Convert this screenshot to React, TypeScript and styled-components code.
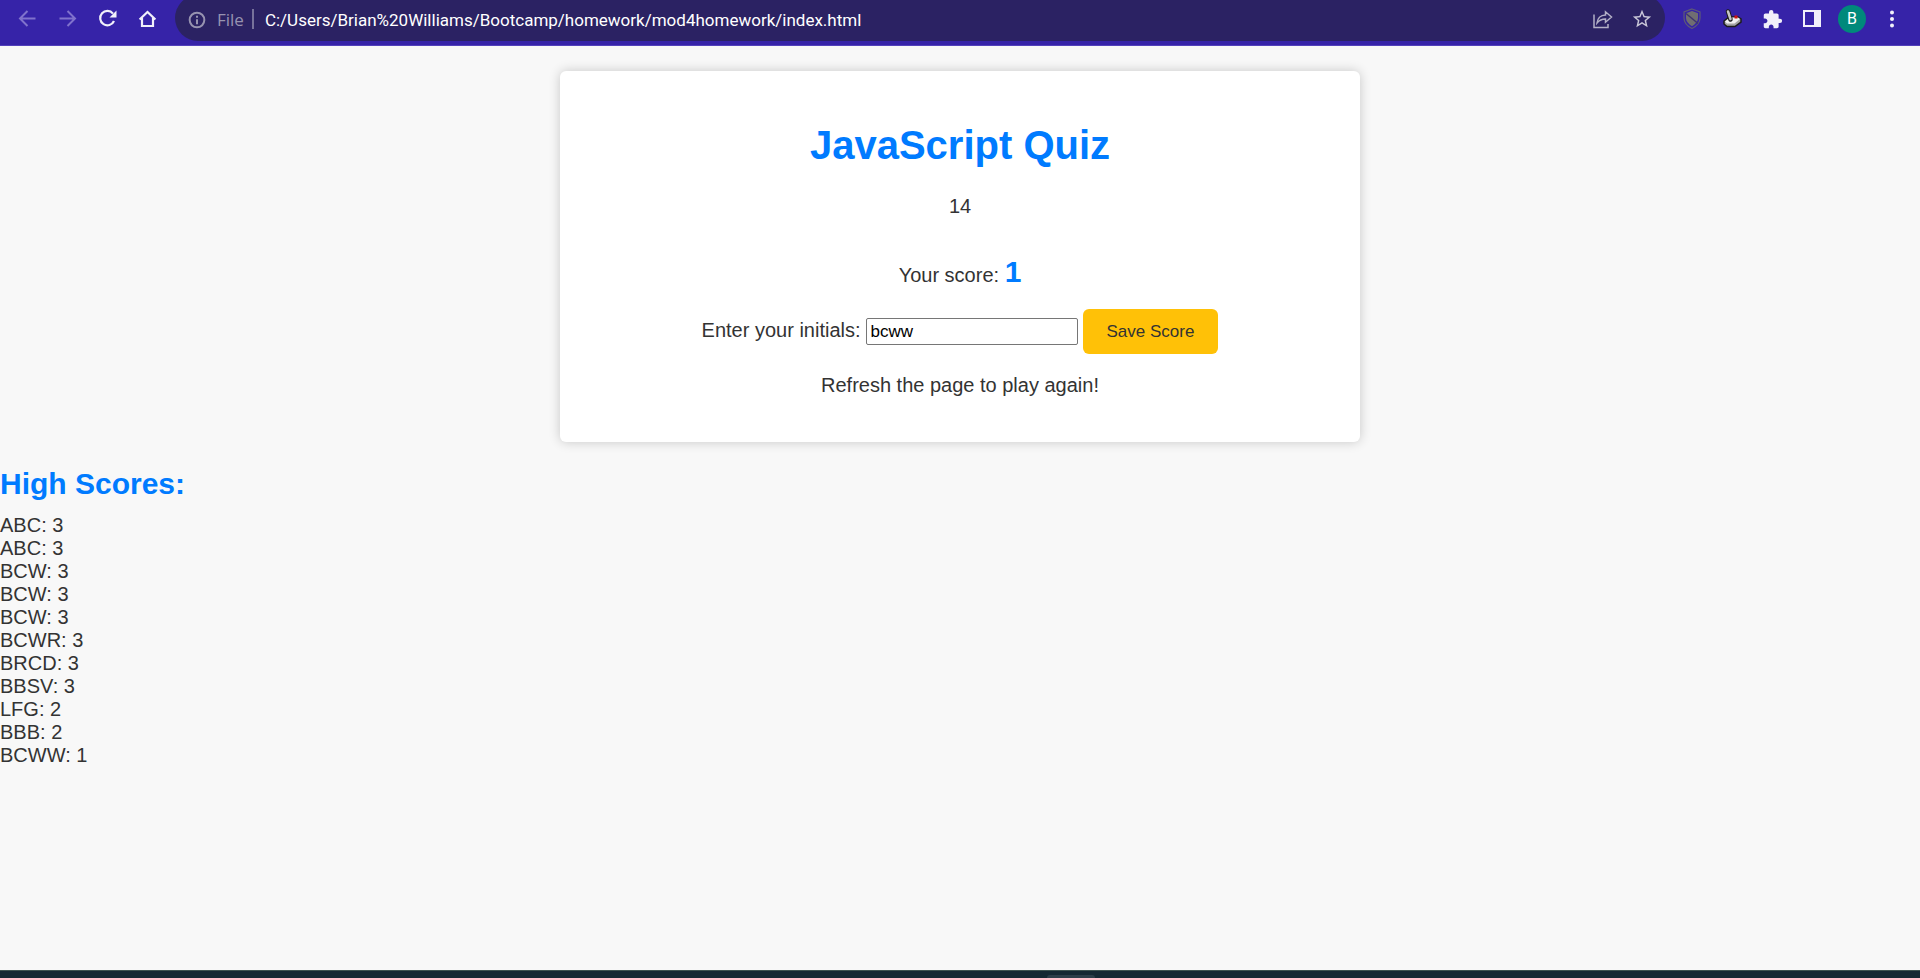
import React, { useState } from "react";
import styled, { createGlobalStyle } from "styled-components";
import { MdExtension, MdStarBorder } from "react-icons/md";

const GlobalStyle = createGlobalStyle`
  *, *::before, *::after { box-sizing: border-box; }
  body {
    margin: 0;
    background: #f8f8f8;
    color: #333;
    font: 20px/23px "Liberation Sans", Arial, sans-serif;
  }
`;

const Shell = styled.div`
  display: flex;
  flex-direction: column;
  min-height: 100vh;
`;

const Toolbar = styled.header`
  display: flex;
  align-items: flex-start;
  height: 46px;
  overflow: hidden;
  background: #3623a8;
  border-bottom: 1px solid #5341bb;
`;

const NavGroup = styled.nav`
  display: flex;
  gap: 16px;
  padding: 7px 16px 0 15px;
`;

const IconButton = styled.button<{ $color?: string }>`
  display: flex;
  width: 24px;
  height: 24px;
  padding: 0;
  border: 0;
  background: none;
  color: ${(p) => p.$color ?? "#f1f0fa"};
  align-items: center;
  justify-content: center;
  cursor: pointer;
`;

const AddressBar = styled.div`
  display: flex;
  flex: 1;
  min-width: 0;
  height: 46px;
  margin-top: -5px;
  padding: 5px 11px 0 12px;
  align-items: flex-start;
  background: #2b2263;
  border-radius: 23px;
`;

const SiteInfo = styled.button`
  display: flex;
  align-items: center;
  gap: 10px;
  height: 40px;
  padding: 0;
  border: 0;
  background: none;
  color: #9793b0;
  font: 17px/40px "Open Sans", "Noto Sans", sans-serif;
`;

const Divider = styled.span`
  width: 2px;
  height: 20px;
  margin: 9px 11px 0 8px;
  background: #77729b;
`;

const UrlInput = styled.input`
  flex: 1;
  min-width: 0;
  height: 40px;
  padding: 0;
  border: 0;
  outline: 0;
  background: none;
  color: #fff;
  font: 17px/40px Roboto, "Noto Sans", sans-serif;
`;

const AddressActions = styled.div`
  display: flex;
  gap: 16px;
  padding-top: 7px;
`;

const ExtensionGroup = styled.div`
  display: flex;
  gap: 16px;
  padding: 7px 16px 0 15px;
`;

const Avatar = styled.button`
  width: 28px;
  height: 28px;
  margin: -2px -2px 0;
  padding: 0;
  border: 0;
  border-radius: 50%;
  background: #00897b;
  color: #fff;
  font: 16px/28px Roboto, sans-serif;
`;

const Page = styled.main`
  flex: 1;
`;

const Card = styled.section`
  max-width: 800px;
  margin: 25px auto;
  padding: 51px 25px 45px;
  background: #fff;
  border-radius: 6px;
  box-shadow: 0 0 12px rgba(0, 0, 0, 0.2);
  text-align: center;
`;

const Title = styled.h1`
  margin: 0 0 27px;
  color: #007bff;
  font-size: 40px;
  line-height: 46px;
`;

const Timer = styled.div`
  margin-bottom: 37px;
`;

const Line = styled.p`
  margin: 0;
`;

const Score = styled.span`
  color: #007bff;
  font-size: 30px;
  font-weight: bold;
  line-height: 34px;
`;

const ScoreForm = styled.form`
  display: flex;
  flex-wrap: wrap;
  justify-content: center;
  align-items: baseline;
  gap: 5px;
  margin: 20px 0;
`;

const InitialsInput = styled.input`
  width: 212px;
  height: 27px;
  padding: 2px 4px;
  border: 1px solid #767676;
  border-radius: 2px;
  background: #fff;
  color: #000;
  font: 17px/20px "Liberation Sans", Arial, sans-serif;
`;

const SaveButton = styled.button`
  height: 45px;
  padding: 0 24px;
  border: 0;
  border-radius: 6px;
  background: #ffc107;
  color: #333;
  font: 17px/20px "Liberation Sans", Arial, sans-serif;
  cursor: pointer;
`;

const ScoresHeading = styled.h2`
  margin: 0 0 13px;
  color: #007bff;
  font-size: 30px;
  line-height: 34px;
`;

const ScoreList = styled.ul`
  margin: 0;
  padding: 0;
  list-style: none;
`;

const Taskbar = styled.footer`
  display: flex;
  justify-content: center;
  align-items: flex-end;
  height: 8px;
  padding-left: 222px;
  background: #142833;
  border-top: 1px solid #3d5350;
`;

const TaskbarItem = styled.span`
  width: 48px;
  height: 3px;
  background: #2c3e49;
  border-radius: 3px 3px 0 0;
`;

const Icon = ({ size = 24, children }: { size?: number; children: React.ReactNode }) => (
  <svg width={size} height={size} viewBox="0 0 24 24" fill="none" stroke="currentColor" strokeWidth="2" aria-hidden="true">
    {children}
  </svg>
);

const scores: [string, number][] = [
  ["ABC", 3], ["ABC", 3], ["BCW", 3], ["BCW", 3], ["BCW", 3], ["BCWR", 3],
  ["BRCD", 3], ["BBSV", 3], ["LFG", 2], ["BBB", 2], ["BCWW", 1],
];

export default function App() {
  const [initials, setInitials] = useState("bcww");
  const [url, setUrl] = useState("C:/Users/Brian%20Williams/Bootcamp/homework/mod4homework/index.html");

  return (
    <Shell>
      <GlobalStyle />
      <Toolbar>
        <NavGroup aria-label="Browser">
          <IconButton aria-label="Back" $color="#8072cc">
            <Icon><path d="M20.5 11.5H5.5M12.5 4l-7.5 7.5 7.5 7.5" /></Icon>
          </IconButton>
          <IconButton aria-label="Forward" $color="#8072cc">
            <Icon><path d="M4.5 11.5h15.5M12.5 4l7.5 7.5-7.5 7.5" /></Icon>
          </IconButton>
          <IconButton aria-label="Reload">
            <Icon>
              <path d="M18 6.600A7.200 7.200 0 1 0 19 14" strokeWidth="2.200" />
              <path d="M21.500 3.500v7h-7z" fill="currentColor" stroke="none" />
            </Icon>
          </IconButton>
          <IconButton aria-label="Home">
            <Icon><path d="M4.600 12.500L12.500 5 20.400 12.500M7 11v8h11v-8" strokeWidth="2.200" /></Icon>
          </IconButton>
        </NavGroup>
        <AddressBar>
          <SiteInfo>
            <Icon size={20}>
              <circle cx="12" cy="12" r="8.800" strokeWidth="2.400" />
              <path d="M12 11v6M12 7v2.400" strokeWidth="2.400" />
            </Icon>
            File
          </SiteInfo>
          <Divider />
          <UrlInput aria-label="Address" value={url} onChange={(e) => setUrl(e.target.value)} />
          <AddressActions>
            <IconButton aria-label="Share" $color="#b3b0c6">
              <Icon>
                <path d="M4 7.500V20.500H18V17" strokeWidth="1.500" />
                <path d="M7 16c.5-4.500 3.500-8 8.500-8V4.800l6 5.200-6 5.200V12c-4 0-6.500 1.500-8.500 4z" strokeWidth="1.500" />
              </Icon>
            </IconButton>
            <IconButton aria-label="Bookmark" $color="#c9c7d8">
              <MdStarBorder size={22} />
            </IconButton>
          </AddressActions>
        </AddressBar>
        <ExtensionGroup>
          <IconButton aria-label="Shield extension" $color="#5d5a77">
            <Icon>
              <path d="M12 2l8 3v6c0 4.500-3 8-8 10.500C7 19 4 15.500 4 11V5z" strokeWidth="1.200" />
              <path d="M12 4l6 2.200V11c0 3.500-2.500 6-6 8.200-3.500-2.200-6-4.700-6-8.200V6.200z" fill="#706e72" stroke="none" />
              <path d="M6 6.500l12 10" stroke="#3f356f" strokeWidth="1.500" />
            </Icon>
          </IconButton>
          <IconButton aria-label="Joystick extension">
            <Icon>
              <path d="M4 14l5-4h9l3 2v3l-6 4.500H7L4 17z" fill="#a5a5a5" stroke="#1d1d1d" strokeWidth="1.500" />
              <path d="M5 14.500l5-4h8l2 1.500-5.500 4.500H7z" fill="#f1f1f1" stroke="none" />
              <path d="M8 4.500l2.500 8" stroke="#1d1d1d" strokeWidth="4.500" strokeLinecap="round" />
              <path d="M8 4.500l2.500 7.500" stroke="#c5c5c5" strokeWidth="2.500" strokeLinecap="round" />
              <path d="M14.500 8.500h3v3h-3z" fill="#d31313" stroke="none" />
            </Icon>
          </IconButton>
          <IconButton aria-label="Extensions">
            <MdExtension size={21} />
          </IconButton>
          <IconButton aria-label="Side panel">
            <Icon><path d="M4 4h16v15H4z" /><path d="M14 4h7v15h-7z" fill="currentColor" stroke="none" /></Icon>
          </IconButton>
          <Avatar aria-label="Profile B">B</Avatar>
          <IconButton aria-label="Menu">
            <Icon>
              <g fill="currentColor" stroke="none">
                <circle cx="12" cy="5.500" r="2" /><circle cx="12" cy="12" r="2" /><circle cx="12" cy="18.500" r="2" />
              </g>
            </Icon>
          </IconButton>
        </ExtensionGroup>
      </Toolbar>
      <Page>
        <Card>
          <Title>JavaScript Quiz</Title>
          <Timer>14</Timer>
          <Line>Your score: <Score>1</Score></Line>
          <ScoreForm onSubmit={(e) => e.preventDefault()}>
            <label htmlFor="initials">Enter your initials:</label>
            <InitialsInput id="initials" value={initials} onChange={(e) => setInitials(e.target.value)} />
            <SaveButton type="submit">Save Score</SaveButton>
          </ScoreForm>
          <Line>Refresh the page to play again!</Line>
        </Card>
        <ScoresHeading>High Scores:</ScoresHeading>
        <ScoreList>
          {scores.map(([name, score], i) => (
            <li key={i}>{name}: {score}</li>
          ))}
        </ScoreList>
      </Page>
      <Taskbar><TaskbarItem /></Taskbar>
    </Shell>
  );
}
